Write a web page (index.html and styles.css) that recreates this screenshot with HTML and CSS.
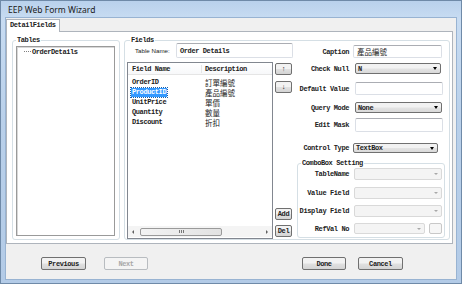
FILE: index.html
```html
<!DOCTYPE html>
<html lang="en">
<head>
    <meta charset="UTF-8">
    <title>EEP Web Form Wizard</title>
    <link rel="stylesheet" href="styles.css">
</head>
<body>
    <div class="window">
        <div class="titlebar">EEP Web Form Wizard</div>
        <div class="client">
            <div class="tabs">
                <div class="tab">DetailFields</div>
            </div>

            <div class="tabpage">
                <fieldset class="group tables">
                    <legend>Tables</legend>
                    <div class="tree">
                        <div class="node"><span class="branch"></span>OrderDetails</div>
                    </div>
                </fieldset>

                <fieldset class="group fields">
                    <legend>Fields</legend>

                    <div class="fields-left">
                        <div class="tname">
                            <span class="sans">Table Name:</span>
                            <div class="textbox tname-box">Order Details</div>
                        </div>
                        <div class="list-area">
                            <div class="listview">
                                <div class="lv-head">
                                    <div class="col-name">Field Name</div>
                                    <div class="col-desc">Description</div>
                                </div>
                                <div class="lv-rows">
                                    <div class="lv-row"><div class="col-name">OrderID</div><div class="col-desc cjk">訂單編號</div></div>
                                    <div class="lv-row"><div class="col-name"><span class="selected">ProductID</span></div><div class="col-desc cjk">產品編號</div></div>
                                    <div class="lv-row"><div class="col-name">UnitPrice</div><div class="col-desc cjk">單價</div></div>
                                    <div class="lv-row"><div class="col-name">Quantity</div><div class="col-desc cjk">數量</div></div>
                                    <div class="lv-row"><div class="col-name">Discount</div><div class="col-desc cjk">折扣</div></div>
                                </div>
                                <div class="hscroll">
                                    <span class="sb-arrow left"></span>
                                    <div class="sb-thumb"><span class="grip"></span></div>
                                    <span class="sb-arrow right"></span>
                                </div>
                            </div>
                            <div class="side-btns">
                                <div class="btn small up">&#8593;</div>
                                <div class="btn small down">&#8595;</div>
                                <div class="btn small add">Add</div>
                                <div class="btn small del">Del</div>
                            </div>
                        </div>
                    </div>

                    <div class="fields-right">
                        <div class="row r-caption">
                            <span class="lbl">Caption</span>
                            <div class="textbox cjk">產品編號</div>
                        </div>
                        <div class="row r-null">
                            <span class="lbl">Check Null</span>
                            <div class="combo"><span class="val">N</span><span class="arrow"></span></div>
                        </div>
                        <div class="row r-default">
                            <span class="lbl">Default Value</span>
                            <div class="textbox"></div>
                        </div>
                        <div class="row r-query">
                            <span class="lbl">Query Mode</span>
                            <div class="combo"><span class="val">None</span><span class="arrow"></span></div>
                        </div>
                        <div class="row r-mask">
                            <span class="lbl">Edit Mask</span>
                            <div class="textbox"></div>
                        </div>
                        <div class="row r-ctype">
                            <span class="lbl">Control Type</span>
                            <div class="combo"><span class="val">TextBox</span><span class="arrow"></span></div>
                        </div>

                        <fieldset class="group combo-set">
                            <legend>ComboBox Setting</legend>
                            <div class="row r-tname">
                                <span class="lbl">TableName</span>
                                <div class="combo disabled"><span class="val"></span><span class="arrow"></span></div>
                            </div>
                            <div class="row r-vfield">
                                <span class="lbl">Value Field</span>
                                <div class="combo disabled"><span class="val"></span><span class="arrow"></span></div>
                            </div>
                            <div class="row r-dfield">
                                <span class="lbl">Display Field</span>
                                <div class="combo disabled"><span class="val"></span><span class="arrow"></span></div>
                            </div>
                            <div class="row r-refval">
                                <span class="lbl">RefVal No</span>
                                <div class="combo disabled"><span class="val"></span><span class="arrow"></span></div>
                                <div class="pick-btn"></div>
                            </div>
                        </fieldset>
                    </div>
                </fieldset>
            </div>

            <div class="footer">
                <div class="btn wide prev">Previous</div>
                <div class="btn wide next disabled">Next</div>
                <div class="btn wide done">Done</div>
                <div class="btn wide cancel">Cancel</div>
            </div>
        </div>
    </div>
</body>
</html>
```

FILE: styles.css
```css
* {
    box-sizing: border-box;
}

body {
    margin: 0;
    font-family: 'Liberation Mono', monospace;
    font-size: 7px;
    font-weight: bold;
    letter-spacing: -0.4px;
    color: #222;
}

.window {
    width: 462px;
    height: 284px;
    display: flex;
    flex-direction: column;
    background: linear-gradient(#b9d1ec, #c8dcf2 18px, #b9d0ea 120px, #b3cbe7);
    border: 1px solid #6f8aa8;
}

.titlebar {
    height: 17px;
    padding-left: 7px;
    font-family: 'Noto Sans', sans-serif;
    font-weight: normal;
    font-size: 8.5px;
    letter-spacing: 0;
    line-height: 17px;
    color: #1a1a1a;
}

.client {
    flex: 1;
    display: flex;
    flex-direction: column;
    margin: 0 5px 4px 5px;
    background-color: #f0f0f0;
    box-shadow: 0 0 0 1px #98b3d2;
}

/* tab strip */
.tabs {
    height: 13px;
    padding-top: 1px;
    display: flex;
}

.tab {
    position: relative;
    z-index: 1;
    width: 54px;
    height: 13px;
    padding-left: 3px;
    line-height: 11px;
    background-color: #fff;
    border: 1px solid #aeb4bc;
    border-bottom: none;
}

.tabpage {
    height: 213px;
    margin-right: 3px;
    padding: 5px 0 0 5px;
    display: flex;
    gap: 4px;
    background-color: #fff;
    border: 1px solid #aeb4bc;
}

/* group boxes */
.group {
    margin: 0;
    padding: 0;
    min-width: 0;
    border: 1px solid #d5dfe5;
    border-radius: 3px;
}

.group legend {
    margin-left: 3px;
    padding: 0 1px;
    line-height: 6px;
}

.tables {
    width: 108px;
    height: 203px;
}

.tree {
    height: 190px;
    margin: 3px 4px 0 3px;
    border: 1px solid #9a9a9a;
    box-shadow: inset 1px 1px 0 #d8d8d8;
}

.node {
    display: flex;
    align-items: center;
    height: 9px;
    padding-left: 7px;
}

.branch {
    width: 7px;
    margin-right: 1px;
    border-top: 1px dotted #808080;
}

.fields {
    width: 326px;
    height: 203px;
    padding-left: 2px;
    display: grid;
    grid-template-columns: 166px 148px;
    column-gap: 4px;
}

/* left side of Fields */
.tname {
    display: flex;
    align-items: center;
    height: 15px;
    padding-left: 8px;
}

.sans {
    font-family: 'Liberation Sans', sans-serif;
    font-weight: normal;
    font-size: 6.2px;
    letter-spacing: 0;
}

.textbox {
    display: flex;
    align-items: center;
    padding-left: 3px;
    background-color: #fff;
    border: 1px solid #dbdfe6;
    border-top-color: #abadb3;
    border-radius: 2px;
}

.tname-box {
    margin-left: auto;
    width: 117px;
    height: 15px;
}

.list-area {
    display: flex;
    margin-top: 4px;
    height: 177px;
}

.listview {
    width: 146px;
    display: flex;
    flex-direction: column;
    border: 1px solid #828790;
}

.lv-head {
    display: flex;
    height: 12px;
    align-items: center;
    border-bottom: 1px solid #e5e5e5;
    background: linear-gradient(#fff, #f7f8fa);
}

.lv-head .col-name {
    border-right: 1px solid #e5e5e5;
}

.col-name {
    width: 74px;
    padding-left: 4px;
}

.col-desc {
    padding-left: 3px;
}

.cjk {
    font-family: 'Noto Sans CJK TC', 'Noto Sans CJK SC', sans-serif;
    font-weight: normal;
    letter-spacing: 0;
}

.lv-rows {
    flex: 1;
    padding-top: 2px;
}

.lv-row {
    display: flex;
    height: 10px;
    align-items: center;
}

.lv-row .col-desc {
    font-size: 7.5px;
}

.selected {
    display: inline-block;
    margin-left: -1px;
    padding: 0 1px;
    line-height: 9px;
    background-color: #3399ff;
    color: #fff;
    outline: 1px dotted #1a5fa8;
}

.hscroll {
    height: 11px;
    display: flex;
    align-items: center;
    padding: 0 4px;
    margin-bottom: 1px;
    background-color: #f4f4f4;
}

.sb-arrow {
    width: 0;
    height: 0;
    border-top: 2px solid transparent;
    border-bottom: 2px solid transparent;
}

.sb-arrow.left {
    border-right: 2px solid #606060;
    margin-right: 6px;
}

.sb-arrow.right {
    border-left: 2px solid #606060;
    margin-left: auto;
}

.sb-thumb {
    width: 82px;
    height: 8px;
    display: flex;
    justify-content: center;
    align-items: center;
    border: 1px solid #9a9a9a;
    border-radius: 2px;
    background: linear-gradient(90deg, #f3f3f3, #e2e2e2);
}

.grip {
    width: 5px;
    height: 3px;
    border-left: 1px solid #777;
    border-right: 1px solid #777;
    background: linear-gradient(90deg, transparent 1px, #777 1px, #777 2px, transparent 2px);
}

.side-btns {
    width: 17px;
    margin-left: 2px;
    display: flex;
    flex-direction: column;
}

/* buttons */
.btn {
    display: flex;
    justify-content: center;
    align-items: center;
    border: 1px solid #707070;
    border-radius: 2px;
    background: linear-gradient(#f2f2f2 45%, #e0e0e0 55%, #d4d4d4);
}

.btn.small {
    height: 12px;
}

.btn.up {
    margin-top: 1px;
}

.btn.down {
    margin-top: 6px;
}

.btn.add {
    margin-top: auto;
}

.btn.del {
    margin-top: 5px;
    margin-bottom: 2px;
}

.footer {
    flex: 1;
    display: flex;
    align-items: flex-start;
    padding: 13px 53px 0 35px;
}

.btn.wide {
    height: 13px;
    width: 45px;
}

.btn.next {
    margin-left: 18px;
    width: 44px;
}

.btn.done {
    margin-left: auto;
    width: 44px;
}

.btn.cancel {
    margin-left: 12px;
}

.btn.disabled {
    border-color: #b8bcc0;
    background: #f4f4f4;
    color: #a8a8a8;
}

/* right side of Fields */
.fields-right {
    display: flex;
    flex-direction: column;
}

.row {
    display: flex;
    align-items: center;
}

.lbl {
    width: 52px;
    text-align: right;
    white-space: nowrap;
}

.combo {
    display: flex;
    align-items: center;
    padding: 0 3px 0 2px;
    border: 1px solid #707070;
    border-radius: 2px;
    background: linear-gradient(#f2f2f2 45%, #e3e3e3 55%, #d9d9d9);
}

.combo .val {
    flex: 1;
}

.arrow {
    width: 0;
    height: 0;
    border-left: 2.5px solid transparent;
    border-right: 2.5px solid transparent;
    border-top: 3px solid #000;
}

.combo.disabled {
    border-color: #d9d9d9;
    background: #f4f4f4;
}

.combo.disabled .arrow {
    border-top-color: #a8a8a8;
    border-left-width: 2px;
    border-right-width: 2px;
    border-top-width: 2px;
}

.r-caption {
    margin-top: 2px;
}

.r-caption .textbox {
    margin-left: 4px;
    width: 89px;
    height: 13px;
    font-size: 7.5px;
}

.r-null {
    margin-top: 5px;
}

.r-null .combo {
    margin-left: 6px;
    width: 86px;
    height: 11px;
}

.r-default {
    margin-top: 8px;
}

.r-default .textbox,
.r-mask .textbox {
    margin-left: 6px;
    width: 88px;
    height: 13px;
}

.r-query {
    margin-top: 7px;
}

.r-query .combo {
    margin-left: 6px;
    width: 87px;
    height: 11px;
}

.r-mask {
    margin-top: 5px;
}

.r-mask .textbox {
    height: 14px;
}

.r-ctype {
    margin-top: 11px;
}

.r-ctype .combo {
    margin-left: 4px;
    width: 85px;
    height: 10px;
}

.combo-set {
    margin-top: 6px;
    padding-bottom: 3px;
}

.combo-set legend {
    line-height: 8px;
}

.combo-set .lbl {
    width: 51px;
}

.combo-set .combo {
    margin-left: 5px;
    width: 88px;
    height: 12px;
}

.r-tname {
    margin-top: 1px;
}

.r-vfield {
    margin-top: 7px;
}

.r-dfield {
    margin-top: 6px;
}

.r-refval {
    margin-top: 6px;
}

.r-refval .combo {
    width: 71px;
    height: 11px;
}

.pick-btn {
    width: 13px;
    height: 11px;
    margin-left: 4px;
    border: 1px solid #c8c8c8;
    border-radius: 2px;
    background-color: #f6f6f6;
}
```
